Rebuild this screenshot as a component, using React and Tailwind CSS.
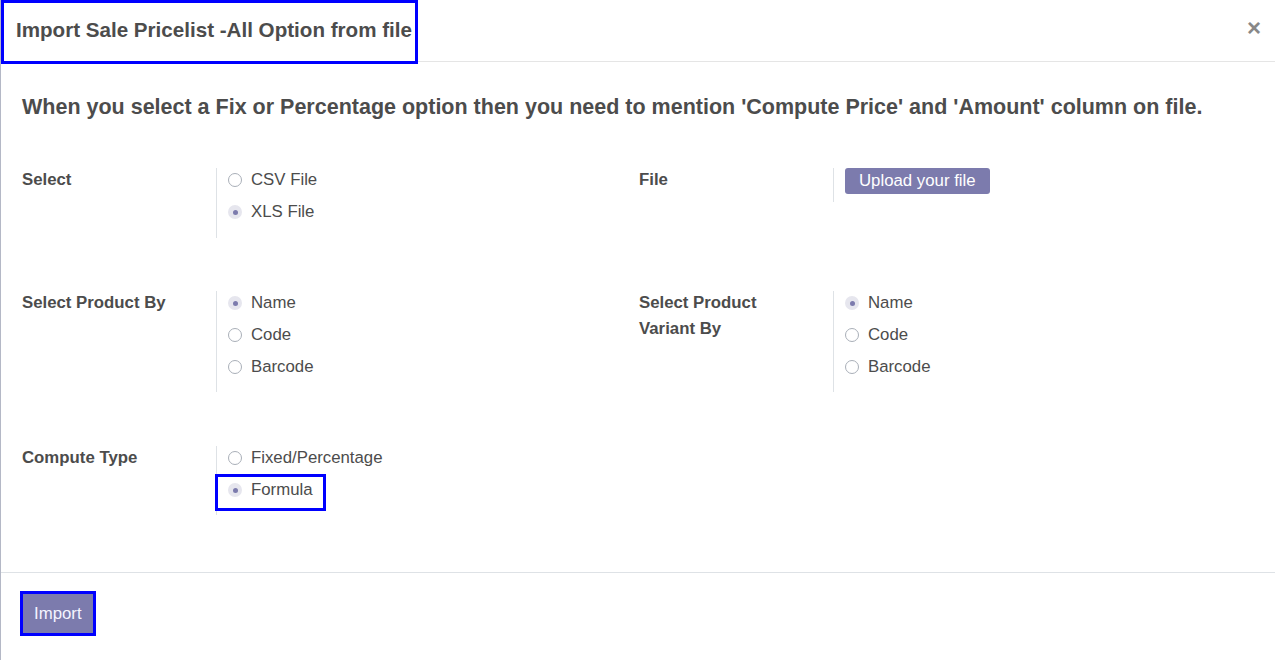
import React from 'react';

function Radio({ label, checked }) {
  return (
    <div className="flex items-center h-[24px]">
      {checked ? (
        <span className="w-[14px] h-[14px] rounded-full bg-[#e6e6ee] flex items-center justify-center mr-[9px]">
          <span className="w-[5px] h-[5px] rounded-full bg-[#7c7bad]" />
        </span>
      ) : (
        <span className="w-[14px] h-[14px] rounded-full border border-[#a9afb8] bg-white mr-[9px]" />
      )}
      <span>{label}</span>
    </div>
  );
}

function Field({ label, children, pb = 'pb-[14px]' }) {
  return (
    <div className="flex items-start">
      <div className="w-[194px] shrink-0 font-bold text-[16.8px] leading-[26px] -mt-[1px] pr-[30px]">{label}</div>
      <div className={`border-l border-[#dee2e6] pl-[11px] flex flex-col gap-[8px] ${pb}`}>{children}</div>
    </div>
  );
}

export default function App() {
  return (
    <div className="w-[1275px] h-[660px] bg-white border-l border-[#b4b8c6] font-['Liberation_Sans',Arial,sans-serif] text-[#4c4c4c] flex flex-col relative overflow-hidden">
      <div className="h-[62px] shrink-0 border-b border-[#e5e5e5] flex items-center justify-between pl-[15px] pr-[14px]">
        <h4 className="text-[20.6px] font-bold">Import Sale Pricelist -All Option from file</h4>
        <button className="text-[24px] font-bold text-[#888] leading-none -mt-[5px]">×</button>
      </div>
      <div className="absolute left-0 top-0 w-[417px] h-[64px] border-[3px] border-[#0000ff]" />

      <div className="flex-1 px-[21px] pt-[31px] text-[16.8px]">
        <p className="text-[21.5px] font-bold leading-[28px]">
          When you select a Fix or Percentage option then you need to mention 'Compute Price' and 'Amount' column on file.
        </p>

        <div className="grid grid-cols-[617px_1fr] mt-[47px]">
          <Field label="Select">
            <Radio label="CSV File" />
            <Radio label="XLS File" checked />
          </Field>
          <Field label="File" pb="pb-[8px]">
            <button className="h-[26px] px-[14px] rounded-[3px] bg-[#7c7bad] text-white text-[16.8px] leading-[26px]">
              Upload your file
            </button>
          </Field>
        </div>

        <div className="grid grid-cols-[617px_1fr] mt-[53px]">
          <Field label="Select Product By" pb="pb-[13px]">
            <Radio label="Name" checked />
            <Radio label="Code" />
            <Radio label="Barcode" />
          </Field>
          <Field label="Select Product Variant By" pb="pb-[13px]">
            <Radio label="Name" checked />
            <Radio label="Code" />
            <Radio label="Barcode" />
          </Field>
        </div>

        <div className="grid grid-cols-[617px_1fr] mt-[54px]">
          <Field label="Compute Type" pb="pb-[13px]">
            <Radio label="Fixed/Percentage" />
            <div className="relative">
              <Radio label="Formula" checked />
              <div className="absolute left-[-13px] top-[-4px] w-[111px] h-[37px] border-[3px] border-[#0000ff]" />
            </div>
          </Field>
        </div>
      </div>

      <div className="h-[88px] shrink-0 border-t border-[#dee2e6] px-[19px] pt-[18px]">
        <button className="h-[45px] px-[11px] border-[3px] border-[#0000ff] bg-[#7c7bad] text-[#f4f4ff] text-[16.8px]">
          Import
        </button>
      </div>
    </div>
  );
}
